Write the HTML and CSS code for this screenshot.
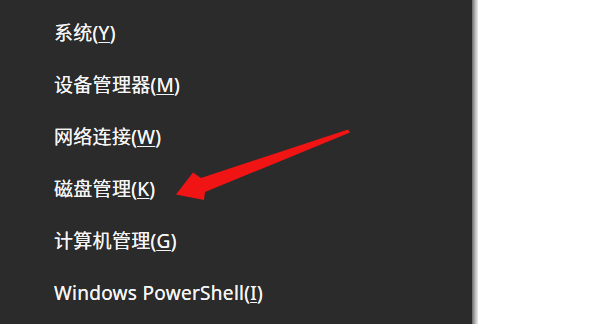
FILE: index.html
```html
<!DOCTYPE html>
<html lang="zh-CN">
<head>
<meta charset="utf-8">
<link rel="stylesheet" href="styles.css">
</head>
<body>
<div class="screen">
  <nav class="menu">
    <ul class="items">
      <li class="item">系统(<u>Y</u>)</li>
      <li class="item">设备管理器(<u>M</u>)</li>
      <li class="item">网络连接(<u>W</u>)</li>
      <li class="item">磁盘管理(<u>K</u>)</li>
      <li class="item">计算机管理(<u>G</u>)</li>
      <li class="item">Windows PowerShell(<u>I</u>)</li>
    </ul>
  </nav>
  <div class="edge"></div>
  <div class="desk"></div>
  <svg class="arrow" width="600" height="324" viewBox="0 0 600 324">
    <polygon points="348,129.5 350,132.5 205,192 204,200 176,194.5 193,172.5 201,178" fill="#f01414"/>
  </svg>
</div>
</body>
</html>
```
FILE: styles.css
```css
html, body {
  margin: 0;
  padding: 0;
  width: 600px;
  height: 324px;
  overflow: hidden;
}
.screen {
  position: relative;
  display: flex;
  width: 600px;
  height: 324px;
}
.menu {
  width: 472px;
  height: 324px;
  background: #2b2b2b;
}
.items {
  list-style: none;
  margin: 0;
  padding: 7px 0 0 54px;
}
.item {
  height: 52px;
  line-height: 52px;
  font-family: "Noto Sans", "Noto Sans CJK SC", sans-serif;
  font-size: 19px;
  letter-spacing: 0.3px;
  color: #f4f4f4;
  white-space: nowrap;
  text-shadow: 0 0 0.4px #ffffff;
}
.item u {
  text-decoration-thickness: 1px;
  text-underline-offset: 2px;
}
.edge {
  width: 6px;
  height: 324px;
  background: linear-gradient(to right, #6a6a6a, #9a9a9a, #c8c8c8, #e8e8e8);
}
.desk {
  flex: 1;
  background: #ffffff;
}
.arrow {
  position: absolute;
  left: 0;
  top: 0;
}
```
